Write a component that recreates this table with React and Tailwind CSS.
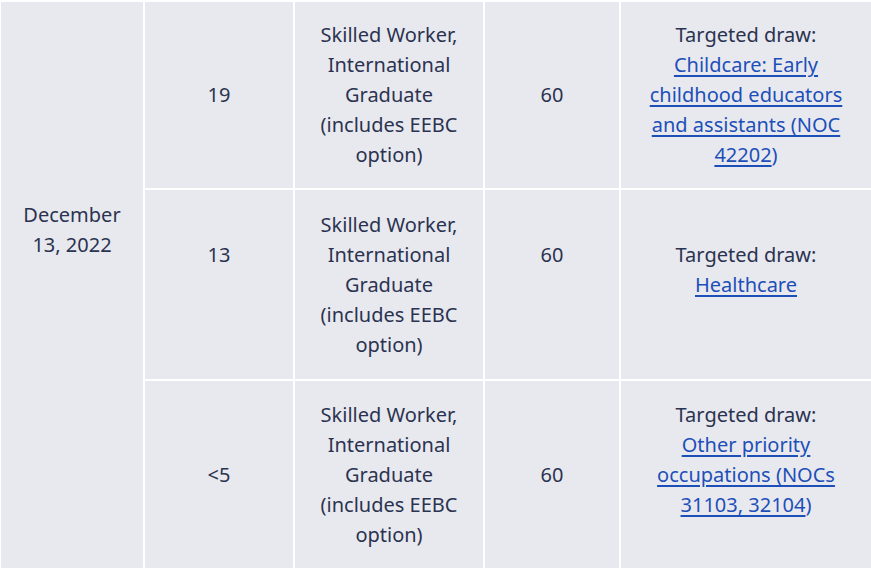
const rows = [
  {
    count: '19',
    score: '60',
    offsets: { count: '', score: '', draw: '' },
    link: 'Childcare: Early childhood educators and assistants (NOC 42202',
  },
  {
    count: '13',
    score: '60',
    offsets: { count: 'pb-[59px]', score: 'pb-[59px]', draw: 'pb-[29px]' },
    link: 'Healthcare',
    noParen: true,
  },
  {
    count: '<5',
    score: '60',
    offsets: { count: '', score: '', draw: 'pb-[29px]' },
    link: 'Other priority occupations (NOCs 31103, 32104',
  },
];

function Cell({ className = '', children }) {
  return (
    <div className={`bg-[#e8e9ef] flex items-center justify-center text-center px-3 ${className}`}>
      <div>{children}</div>
    </div>
  );
}

export default function App() {
  return (
    <div
      className="w-[871px] h-[571px] bg-white pt-[2px] pl-[1px] pb-[3px] text-[20px] leading-[30px] text-[#2b3350]"
      style={{ fontFamily: '"Noto Sans", "Open Sans", sans-serif' }}
    >
      <div className="grid grid-cols-[142px_148px_188px_134px_250px] grid-rows-[186px_189px_187px] gap-[2px]">
        <Cell className="row-span-3 pb-[110px]">December 13, 2022</Cell>
        {rows.map((r, i) => (
          <Row key={i} r={r} />
        ))}
      </div>
    </div>
  );
}

function Row({ r }) {
  return (
    <>
      <Cell className={r.offsets.count}>{r.count}</Cell>
      <Cell>Skilled Worker, International Graduate (includes EEBC option)</Cell>
      <Cell className={r.offsets.score}>{r.score}</Cell>
      <Cell className={r.offsets.draw}>
        <span className="block">Targeted draw:</span>
        <a href="#" className="text-[#1d4fb8] underline underline-offset-[3px]">
          {r.link}
        </a>
        {!r.noParen && <span className="text-[#1d4fb8]">)</span>}
      </Cell>
    </>
  );
}
